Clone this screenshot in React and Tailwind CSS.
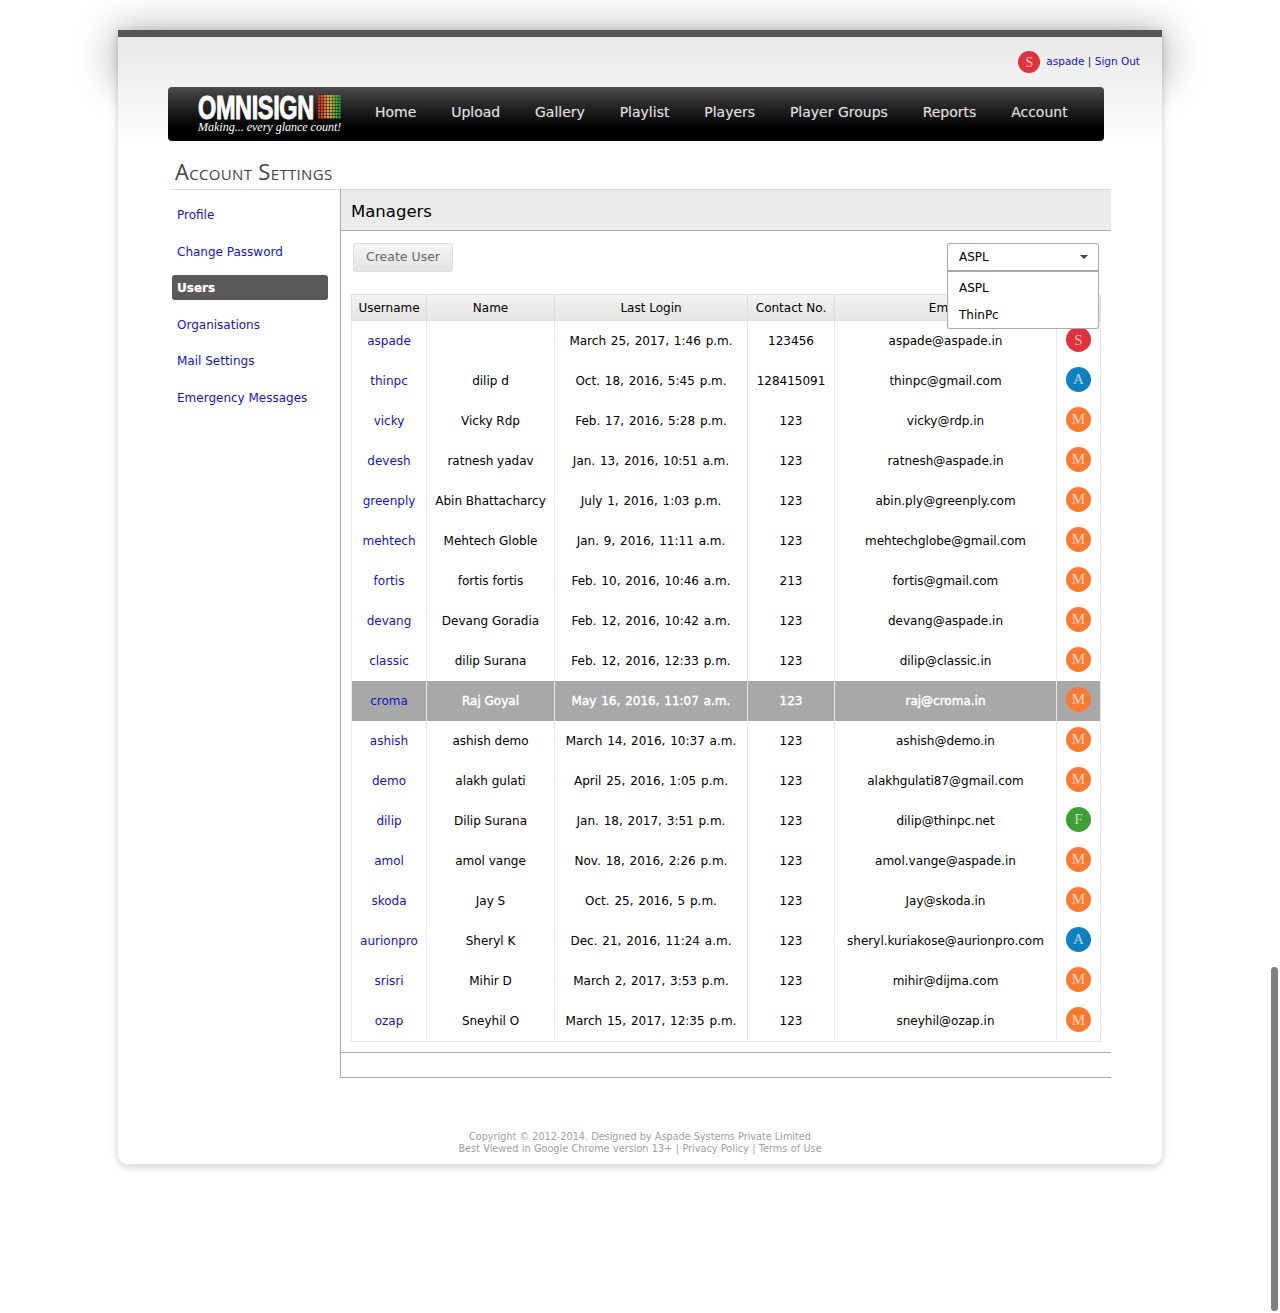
import React from 'react';

const navItems = ['Home', 'Upload', 'Gallery', 'Playlist', 'Players', 'Player Groups', 'Reports', 'Account'];

const sideLinks = [
  { label: 'Profile', cls: 'h-[37px]' },
  { label: 'Change Password', cls: 'h-[37px]' },
  { label: 'Users', active: true },
  { label: 'Organisations', cls: 'h-[37px] mt-[6px]' },
  { label: 'Mail Settings', cls: 'h-[36px]' },
  { label: 'Emergency Messages', cls: 'h-[37px]' },
];

const users = [
  ['aspade', '', 'March 25, 2017, 1:46 p.m.', '123456', 'aspade@aspade.in', 'S'],
  ['thinpc', 'dilip d', 'Oct. 18, 2016, 5:45 p.m.', '128415091', 'thinpc@gmail.com', 'A'],
  ['vicky', 'Vicky Rdp', 'Feb. 17, 2016, 5:28 p.m.', '123', 'vicky@rdp.in', 'M'],
  ['devesh', 'ratnesh yadav', 'Jan. 13, 2016, 10:51 a.m.', '123', 'ratnesh@aspade.in', 'M'],
  ['greenply', 'Abin Bhattacharcy', 'July 1, 2016, 1:03 p.m.', '123', 'abin.ply@greenply.com', 'M'],
  ['mehtech', 'Mehtech Globle', 'Jan. 9, 2016, 11:11 a.m.', '123', 'mehtechglobe@gmail.com', 'M'],
  ['fortis', 'fortis fortis', 'Feb. 10, 2016, 10:46 a.m.', '213', 'fortis@gmail.com', 'M'],
  ['devang', 'Devang Goradia', 'Feb. 12, 2016, 10:42 a.m.', '123', 'devang@aspade.in', 'M'],
  ['classic', 'dilip Surana', 'Feb. 12, 2016, 12:33 p.m.', '123', 'dilip@classic.in', 'M'],
  ['croma', 'Raj Goyal', 'May 16, 2016, 11:07 a.m.', '123', 'raj@croma.in', 'M'],
  ['ashish', 'ashish demo', 'March 14, 2016, 10:37 a.m.', '123', 'ashish@demo.in', 'M'],
  ['demo', 'alakh gulati', 'April 25, 2016, 1:05 p.m.', '123', 'alakhgulati87@gmail.com', 'M'],
  ['dilip', 'Dilip Surana', 'Jan. 18, 2017, 3:51 p.m.', '123', 'dilip@thinpc.net', 'F'],
  ['amol', 'amol vange', 'Nov. 18, 2016, 2:26 p.m.', '123', 'amol.vange@aspade.in', 'M'],
  ['skoda', 'Jay S', 'Oct. 25, 2016, 5 p.m.', '123', 'Jay@skoda.in', 'M'],
  ['aurionpro', 'Sheryl K', 'Dec. 21, 2016, 11:24 a.m.', '123', 'sheryl.kuriakose@aurionpro.com', 'A'],
  ['srisri', 'Mihir D', 'March 2, 2017, 3:53 p.m.', '123', 'mihir@dijma.com', 'M'],
  ['ozap', 'Sneyhil O', 'March 15, 2017, 12:35 p.m.', '123', 'sneyhil@ozap.in', 'M'],
];

const avatarColors = {
  S: 'bg-[#e0323c]',
  A: 'bg-[#0d82bf]',
  M: 'bg-[#fb7a32]',
  F: 'bg-[#3f9e36]',
};

const Avatar = ({ letter, size = 'w-[25px] h-[25px] text-[15px]' }) => (
  <span className={`inline-flex items-center justify-center rounded-full text-white/70 font-['Liberation_Serif',serif] ${size} ${avatarColors[letter]}`}>
    {letter}
  </span>
);

// the little LED grid next to the logo, columns go red to green
const LogoGrid = () => {
  const cols = ['#d8332c', '#e0452b', '#e8772a', '#eca52c', '#d3b52f', '#8fb33a', '#4fa63f', '#2f9a45'];
  return (
    <svg width="23" height="24" viewBox="0 0 23 24" className="shrink-0">
      {cols.map((c, x) =>
        [0, 1, 2, 3, 4, 5, 6, 7].map((y) => (
          <rect key={`${x}-${y}`} x={x * 2.9} y={y * 3} width="2.3" height="2.4" fill={c} />
        ))
      )}
    </svg>
  );
};

const Logo = () => (
  <div className="w-[143px] shrink-0 flex flex-col items-start">
    <div className="flex items-center h-[25px] gap-[3px]">
      <span className="block w-[117px] text-white font-['Liberation_Sans',sans-serif] font-bold text-[34px] leading-[25px] tracking-[-0.5px] whitespace-nowrap origin-left scale-x-[0.69] [-webkit-text-stroke:1px_white]">
        OMNISIGN
      </span>
      <LogoGrid />
    </div>
    <span className="block mt-[1px] text-white font-['Liberation_Serif',serif] italic text-[12px] leading-[13px] whitespace-nowrap">
      Making... every glance count!
    </span>
  </div>
);

const App = () => {
  return (
    <div className="relative h-[1313px] bg-white overflow-hidden pt-[30px] font-['DejaVu_Sans',Verdana,sans-serif] text-[12px] text-black">
      {/* soft dark glow behind the top of the card */}
      <div className="absolute left-[128px] top-[42px] w-[1024px] h-[30px] shadow-[0_0_42px_12px_rgba(0,0,0,0.33)]" />

      <div className="relative ml-[118px] w-[1044px] h-[1134px] rounded-b-[10px] shadow-[0_2px_8px_rgba(0,0,0,0.22)] bg-gradient-to-b from-[#e8e8e8] to-white to-[110px] border-t-[7px] border-[#555555]">
        {/* user line */}
        <div className="flex items-center justify-end h-[50px] pr-[22px] gap-[6px]">
          <Avatar letter="S" size="w-[22px] h-[22px] text-[14px]" />
          <span className="text-[10.5px] text-[#1414cc]">
            aspade <span className="text-[#222]">|</span> Sign Out
          </span>
        </div>

        {/* main nav */}
        <div className="ml-[50px] w-[936px] h-[54px] rounded-[4px] bg-gradient-to-b from-[#4c4c4c] to-black flex items-center pl-[30px]">
          <Logo />
          <nav className="flex items-center gap-[34.8px] ml-[34px] mb-[4px] text-[14px] text-[#dddddd] [text-shadow:0_0_1px_rgba(255,255,255,0.4)]">
            {navItems.map((n) => (
              <span key={n} className="whitespace-nowrap">{n}</span>
            ))}
          </nav>
        </div>

        <h1 className="ml-[57px] mt-[17px] h-[31px] text-[22px] leading-[27px] tracking-[0.33px] text-[#444444] font-['Open_Sans',sans-serif] [font-variant:small-caps]">
          Account Settings
        </h1>

        <div className="flex ml-[52px] w-[941px]">
          {/* sidebar */}
          <div className="w-[170px] shrink-0 border-t border-[#dddddd] pt-[6px] pl-[2px] pr-[12px]">
            {sideLinks.map((s) =>
              s.active ? (
                <div key={s.label} className="h-[25px] mt-[5px] rounded-[3px] bg-[#5a5858] text-white font-bold flex items-center pl-[5px] [text-shadow:0_0_1px_rgba(255,255,255,0.6)]">
                  {s.label}
                </div>
              ) : (
                <div key={s.label} className={`flex items-center pl-[5px] text-[#1414cc] ${s.cls}`}>
                  {s.label}
                </div>
              )
            )}
          </div>

          {/* panel */}
          <div className="flex-1 border-l border-[#aaaaaa] border-b h-[889px]">
            <div className="h-[42px] bg-[#ebebeb] border-y border-y-[#dddddd] border-b-[#aaaaaa] flex items-center pl-[10px] pt-[4px] text-[16.5px]">
              Managers
            </div>

            <div className="relative flex items-center justify-between h-[29px] mt-[12px] pl-[12px] pr-[12px]">
              <button className="w-[100px] h-[29px] rounded-[3px] border border-[#dddddd] bg-gradient-to-b from-[#f5f5f5] to-[#e3e3e3] text-[#666666] text-[12.5px]">
                Create User
              </button>
              <div className="w-[152px] h-[29px] rounded-t-[3px] border border-[#aaaaaa] border-b-2 bg-white flex items-center justify-between pl-[11px] pr-[10px] z-20">
                <span>ASPL</span>
                <span className="w-0 h-0 border-x-[4px] border-x-transparent border-t-[4px] border-t-[#444444]" />
              </div>
              {/* open dropdown list */}
              <div className="absolute right-[12px] top-[29px] w-[152px] h-[57px] bg-white border border-t-0 border-[#aaaaaa] rounded-b-[3px] z-10 pl-[11px] pt-[2px]">
                <div className="h-[27px] flex items-center">ASPL</div>
                <div className="h-[27px] flex items-center">ThinPc</div>
              </div>
            </div>

            <div className="mt-[22px] ml-[10px]">
              <table className="border-collapse w-[749px] table-fixed text-center">
                <colgroup>
                  <col className="w-[75px]" />
                  <col className="w-[128px]" />
                  <col className="w-[193px]" />
                  <col className="w-[87px]" />
                  <col className="w-[222px]" />
                  <col className="w-[44px]" />
                </colgroup>
                <thead>
                  <tr className="h-[26px] bg-gradient-to-b from-[#f2f2f2] to-[#e4e4e4]">
                    {['Username', 'Name', 'Last Login', 'Contact No.', 'Email', ''].map((h, i) => (
                      <th key={i} className="border border-[#dddddd] font-normal p-0">{h}</th>
                    ))}
                  </tr>
                </thead>
                <tbody className="border-b border-[#e8e8e8]">
                  {users.map((u) => {
                    const hl = u[0] === 'croma';
                    const cell = `border-x border-[#e8e8e8] p-0 whitespace-nowrap ${hl ? 'text-white [-webkit-text-stroke:0.4px_white]' : ''}`;
                    return (
                      <tr key={u[0]} className={`h-[40px] last:h-[41px] ${hl ? 'bg-[#a8a8a8]' : ''}`}>
                        <td className="border-x border-[#e8e8e8] p-0 text-[#1414cc]">{u[0]}</td>
                        <td className={cell}>{u[1]}</td>
                        <td className={`${cell} [word-spacing:1px]`}>{u[2]}</td>
                        <td className={cell}>{u[3]}</td>
                        <td className={cell}>{u[4]}</td>
                        <td className="border-x border-[#e8e8e8] p-0">
                          <span className="flex justify-center mb-[2px]"><Avatar letter={u[5]} /></span>
                        </td>
                      </tr>
                    );
                  })}
                </tbody>
              </table>
            </div>

            <div className="mt-[10px] border-t border-[#aaaaaa]" />
          </div>
        </div>

        {/* footer */}
        <div className="mt-[53px] text-center text-[9.7px] leading-[12px] text-[#a0a0a0]">
          <div>Copyright © 2012-2014. Designed by Aspade Systems Private Limited</div>
          <div className="[word-spacing:0.33px]">Best Viewed in Google Chrome version 13+ | Privacy Policy | Terms of Use</div>
        </div>
      </div>

      {/* overlay scrollbar */}
      <div className="absolute left-[1271px] top-[967px] w-[7px] h-[344px] rounded-full bg-[#7f7f7f]" />
    </div>
  );
};

export default App;
